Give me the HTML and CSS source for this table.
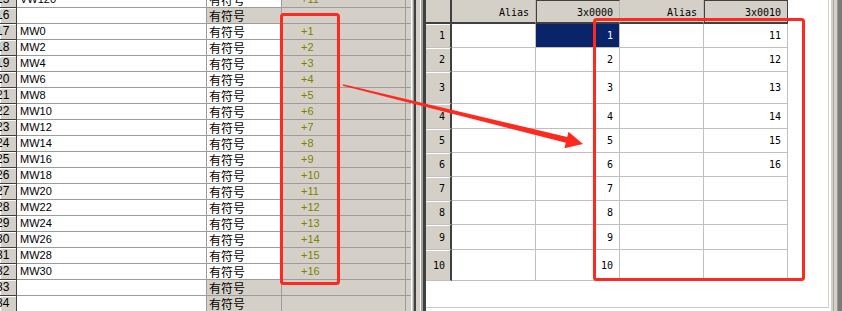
FILE: index.html
```html
<!DOCTYPE html>
<html>
<head>
<meta charset="utf-8">
<link rel="stylesheet" href="styles.css">
</head>
<body>
<div class="screen">
  <div class="left">
    <div class="ltable">
      <div class="lrow"><div class="rn">15</div><div class="nm">VW120</div><div class="ty">有符号</div><div class="vl">+11</div><div class="ex"></div></div>
      <div class="lrow"><div class="rn">16</div><div class="nm"></div><div class="ty g">有符号</div><div class="vl"></div><div class="ex"></div></div>
      <div class="lrow"><div class="rn">17</div><div class="nm">MW0</div><div class="ty">有符号</div><div class="vl">+1</div><div class="ex"></div></div>
      <div class="lrow"><div class="rn">18</div><div class="nm">MW2</div><div class="ty">有符号</div><div class="vl">+2</div><div class="ex"></div></div>
      <div class="lrow"><div class="rn">19</div><div class="nm">MW4</div><div class="ty">有符号</div><div class="vl">+3</div><div class="ex"></div></div>
      <div class="lrow"><div class="rn">20</div><div class="nm">MW6</div><div class="ty">有符号</div><div class="vl">+4</div><div class="ex"></div></div>
      <div class="lrow"><div class="rn">21</div><div class="nm">MW8</div><div class="ty">有符号</div><div class="vl">+5</div><div class="ex"></div></div>
      <div class="lrow"><div class="rn">22</div><div class="nm">MW10</div><div class="ty">有符号</div><div class="vl">+6</div><div class="ex"></div></div>
      <div class="lrow"><div class="rn">23</div><div class="nm">MW12</div><div class="ty">有符号</div><div class="vl">+7</div><div class="ex"></div></div>
      <div class="lrow"><div class="rn">24</div><div class="nm">MW14</div><div class="ty">有符号</div><div class="vl">+8</div><div class="ex"></div></div>
      <div class="lrow"><div class="rn">25</div><div class="nm">MW16</div><div class="ty">有符号</div><div class="vl">+9</div><div class="ex"></div></div>
      <div class="lrow"><div class="rn">26</div><div class="nm">MW18</div><div class="ty">有符号</div><div class="vl">+10</div><div class="ex"></div></div>
      <div class="lrow"><div class="rn">27</div><div class="nm">MW20</div><div class="ty">有符号</div><div class="vl">+11</div><div class="ex"></div></div>
      <div class="lrow"><div class="rn">28</div><div class="nm">MW22</div><div class="ty">有符号</div><div class="vl">+12</div><div class="ex"></div></div>
      <div class="lrow"><div class="rn">29</div><div class="nm">MW24</div><div class="ty">有符号</div><div class="vl">+13</div><div class="ex"></div></div>
      <div class="lrow"><div class="rn">30</div><div class="nm">MW26</div><div class="ty">有符号</div><div class="vl">+14</div><div class="ex"></div></div>
      <div class="lrow"><div class="rn">31</div><div class="nm">MW28</div><div class="ty">有符号</div><div class="vl">+15</div><div class="ex"></div></div>
      <div class="lrow"><div class="rn">32</div><div class="nm">MW30</div><div class="ty">有符号</div><div class="vl">+16</div><div class="ex"></div></div>
      <div class="lrow"><div class="rn">33</div><div class="nm"></div><div class="ty g">有符号</div><div class="vl"></div><div class="ex"></div></div>
      <div class="lrow"><div class="rn">34</div><div class="nm"></div><div class="ty g">有符号</div><div class="vl"></div><div class="ex"></div></div>
    </div>
  </div>
  <div class="splitter"></div>
  <div class="right">
    <div class="pane">
      <div class="gridarea">
        <div class="grid">
          <div class="corner"></div><div class="ch">Alias</div><div class="ch val">3x0000</div><div class="ch">Alias</div><div class="ch val last">3x0010</div>
          <div class="rh">1</div><div class="c"></div><div class="c sel">1</div><div class="c"></div><div class="c">11</div>
          <div class="rh">2</div><div class="c"></div><div class="c">2</div><div class="c"></div><div class="c">12</div>
          <div class="rh">3</div><div class="c"></div><div class="c">3</div><div class="c"></div><div class="c">13</div>
          <div class="rh">4</div><div class="c"></div><div class="c">4</div><div class="c"></div><div class="c">14</div>
          <div class="rh">5</div><div class="c"></div><div class="c">5</div><div class="c"></div><div class="c">15</div>
          <div class="rh">6</div><div class="c"></div><div class="c">6</div><div class="c"></div><div class="c">16</div>
          <div class="rh">7</div><div class="c"></div><div class="c">7</div><div class="c"></div><div class="c"></div>
          <div class="rh">8</div><div class="c"></div><div class="c">8</div><div class="c"></div><div class="c"></div>
          <div class="rh">9</div><div class="c"></div><div class="c">9</div><div class="c"></div><div class="c"></div>
          <div class="rh">10</div><div class="c"></div><div class="c">10</div><div class="c"></div><div class="c"></div>
        </div>
      </div>
      <div class="bottomstrip"></div>
    </div>
    <div class="edge"></div>
  </div>
  <svg class="annot" width="842" height="311" viewBox="0 0 842 311">
    <rect x="281.5" y="14.5" width="57" height="269" rx="2" fill="none" stroke="#ff2a1f" stroke-width="3"/>
    <rect x="594.5" y="19.5" width="209" height="260" rx="2" fill="none" stroke="#ff2a1f" stroke-width="3"/>
    <polygon points="343.17,84.32 567.21,137.03 568.52,131.69 583,144 564.46,148.2 565.77,142.85 342.83,85.68" fill="#ff2a1f"/>
  </svg>
</div>
</body>
</html>
```

FILE: styles.css
```css
body {
  margin: 0;
  background: #fff;
}

.screen {
  position: relative;
  width: 842px;
  height: 311px;
  overflow: hidden;
  display: flex;
  background: #fff;
}

/* ---------- left table ---------- */
.left {
  flex: none;
  width: 411px;
  height: 311px;
  overflow: hidden;
  background: #fff;
}

.ltable {
  margin-top: -8px;
}

.lrow {
  display: grid;
  grid-template-columns: 17px 190px 75px 124px 5px;
  height: 16px;
}

.lrow > div {
  box-sizing: border-box;
  height: 16px;
  border-bottom: 1px solid #9c9c9c;
  border-right: 1px solid #9c9c9c;
  font: 11px/15px "Liberation Sans", Arial, sans-serif;
  color: #000;
  white-space: nowrap;
  overflow: hidden;
}

.lrow > .rn {
  background: #d4d0c8;
  border-right-color: #404040;
  border-bottom-color: #404040;
  box-shadow: inset 1px 1px #fff;
  text-align: left;
  text-indent: -4px;
  font-size: 12px;
}

.lrow > .nm {
  background: #fff;
  padding-left: 3px;
}

.lrow > .ty {
  background: #fff;
  padding-left: 2px;
  font: 12px/15px "Noto Sans CJK SC", sans-serif;
}

.lrow > .ty.g {
  background: #d4d0c8;
}

.lrow > .vl {
  background: #d4d0c8;
  color: #808000;
  padding-left: 19px;
}

.lrow > .ex {
  background: #d4d0c8;
  border-right: none;
}

/* ---------- splitter ---------- */
.splitter {
  flex: none;
  width: 15px;
  height: 311px;
  background: linear-gradient(to right,
    #ffffff 0 1px,
    #d4d0c8 1px 2px,
    #a0a0a0 2px 3px,
    #404040 3px 5px,
    #d4d0c8 5px 9px,
    #ffffff 9px 10px,
    #a0a0a0 10px 12px,
    #404040 12px 15px);
}

/* ---------- right panel ---------- */
.right {
  flex: 1;
  display: flex;
  height: 311px;
}

.pane {
  flex: 1;
  display: flex;
  flex-direction: column;
}

.gridarea {
  height: 307px;
  background: #fff;
  border-right: 1px solid #d4d0c8;
  border-bottom: 1px solid #c8c8c8;
}

.bottomstrip {
  flex: 1;
  background: #fff;
}

.edge {
  flex: none;
  width: 13px;
  background: linear-gradient(to right,
    #ffffff 0 2px,
    #d4d0c8 2px 4px,
    #a8a8a8 4px 5px,
    #d4d0c8 5px 8px,
    #9a9a9a 8px 9px,
    #7a7a7a 9px 13px);
}

.grid {
  display: grid;
  grid-template-columns: 26px 84px 84px 84px 84px;
  grid-template-rows: 24px 24px 24px 32px 25px 24px 24px 24px 24px 25px 31px;
  width: max-content;
  font: 10px "DejaVu Sans Mono", monospace;
  color: #000;
}

.grid > div {
  box-sizing: border-box;
  display: flex;
  align-items: center;
  justify-content: flex-end;
  white-space: nowrap;
}

.corner {
  background: #d4d0c8;
  border-right: 2px solid #404040;
  border-bottom: 2px solid #404040;
}

.ch {
  background: #d4d0c8;
  border-bottom: 2px solid #404040;
  border-right: 1px solid #b8b8b8;
  padding-right: 6px;
  padding-top: 2px;
}

.ch.val {
  border-left: 1px solid #404040;
  border-top: 1px solid #404040;
}

.ch.last {
  border-right: 1px solid #404040;
}

.rh {
  background: #d4d0c8;
  border-right: 2px solid #404040;
  border-bottom: 1px solid #c0c0c0;
  box-shadow: inset 0 1px #ffffff;
  padding-right: 5px;
}

.c {
  background: #fff;
  border-right: 1px solid #c0c0c0;
  border-bottom: 1px solid #c0c0c0;
  padding-right: 6px;
}

.c.sel {
  background: #0a246a;
  color: #fff;
}

/* ---------- annotations ---------- */
.annot {
  position: absolute;
  left: 0;
  top: 0;
  pointer-events: none;
}
```
